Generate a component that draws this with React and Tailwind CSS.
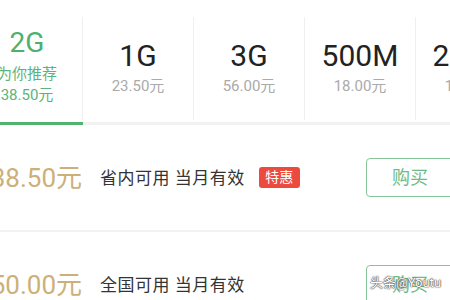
import React from "react";

const font = { fontFamily: "Roboto, 'Noto Sans CJK SC', sans-serif" };

const tabs = [
  { size: "1G", price: "23.50元" },
  { size: "3G", price: "56.00元" },
  { size: "500M", price: "18.00元" },
  { size: "200M", price: "10.00元" },
];

function Row({ price, desc, badge }) {
  return (
    <div className="flex items-center h-[105px]">
      <div className="w-[82px] shrink-0 flex justify-end">
        <span className="whitespace-nowrap text-[26px] leading-[30px] text-[#cdb079]">{price}</span>
      </div>
      <span className="ml-[18px] whitespace-nowrap text-[17px] leading-[22px] tracking-[0.5px] text-[#333]">{desc}</span>
      {badge && (
        <span className="ml-[14px] h-[21px] w-[41px] rounded-[3px] bg-[#ec4a3e] text-white text-[14px] leading-[21px] flex items-center justify-center">
          {badge}
        </span>
      )}
      <button className="ml-auto mr-[-4px] shrink-0 w-[88px] h-[39px] rounded-[4px] border-[1.5px] border-[#86c79a] text-[#6dbb86] text-[18px] flex items-center justify-center bg-white">
        购买
      </button>
    </div>
  );
}

export default function App() {
  return (
    <div className="relative w-[450px] h-[300px] overflow-hidden bg-white" style={font}>
      <div className="flex ml-[-28px]">
        <div className="shrink-0 w-[111px] h-[125px] border-b-[3px] border-[#52b36f] flex">
          <div className="w-[110px] flex flex-col items-center pt-[27px]">
            <span className="text-[28px] leading-[32px] text-[#4fb06e]">2G</span>
            <span className="mt-[5px] text-[15px] leading-[20px] text-[#5bb47a] whitespace-nowrap">为你推荐</span>
            <span className="mt-[1px] text-[15px] leading-[20px] text-[#5bb47a] whitespace-nowrap">38.50元</span>
          </div>
          <div className="w-px h-[103px] mt-[17px] bg-[#f0f0f0]" />
        </div>
        {tabs.map((t) => (
          <div key={t.size} className="shrink-0 w-[111px] h-[125px] border-b-[3px] border-[#f2f2f2] flex">
            <div className="w-[110px] flex flex-col items-center pt-[39px]">
              <span className="text-[30px] leading-[34px] text-[#222] whitespace-nowrap">{t.size}</span>
              <span className="mt-[3px] text-[15px] leading-[20px] text-[#aaa] whitespace-nowrap">{t.price}</span>
            </div>
            <div className="w-px h-[103px] mt-[17px] bg-[#f0f0f0]" />
          </div>
        ))}
      </div>
      <Row price="38.50元" desc="省内可用 当月有效" badge="特惠" />
      <div className="h-[2px] bg-[#f2f2f2]" />
      <Row price="50.00元" desc="全国可用 当月有效" />
      <div
        className="absolute left-[370px] top-[274px] text-[13px] leading-[18px] text-white whitespace-nowrap"
        style={{ textShadow: "0 0 1px #444, 0 0 1px #444, 0 0 2px #666" }}
      >
        头条@Youtu
      </div>
    </div>
  );
}
